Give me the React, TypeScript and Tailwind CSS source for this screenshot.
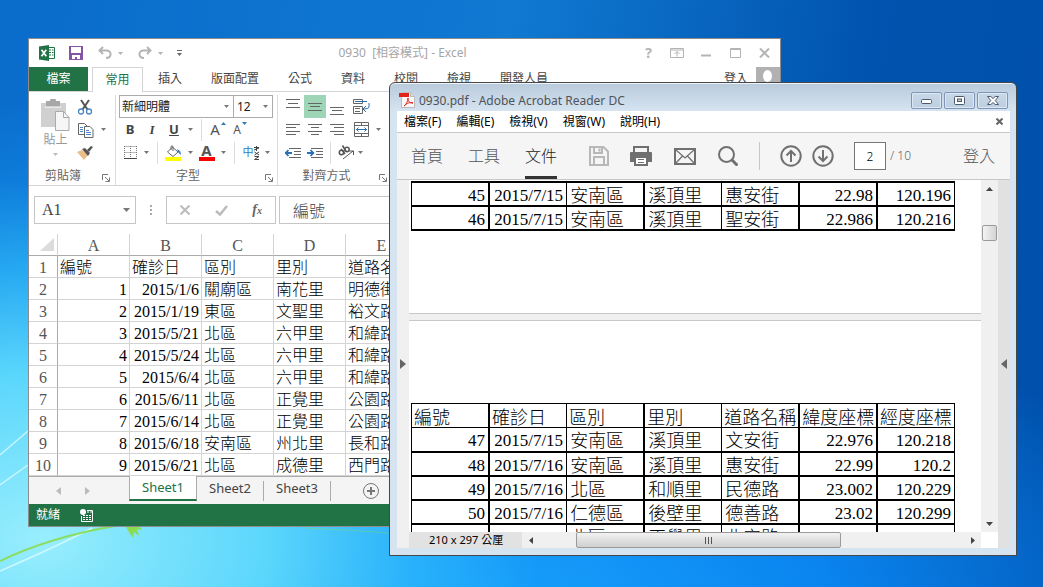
import React from 'react';

const uiFont = "font-['Noto_Sans','Noto_Sans_CJK_TC',sans-serif]";
const cellFont = "font-['Liberation_Serif','Noto_Sans_CJK_TC',serif]";

const ribbonTabs = ['插入', '版面配置', '公式', '資料', '校閱', '檢視', '開發人員'];
const columns = ['A', 'B', 'C', 'D', 'E', 'F', 'G', 'H', 'I', 'J'];

const sheetRows = [
  ['編號', '確診日', '區別', '里別', '道路名稱'],
  ['1', '2015/1/6', '關廟區', '南花里', '明德街'],
  ['2', '2015/1/19', '東區', '文聖里', '裕文路'],
  ['3', '2015/5/21', '北區', '六甲里', '和緯路'],
  ['4', '2015/5/24', '北區', '六甲里', '和緯路'],
  ['5', '2015/6/4', '北區', '六甲里', '和緯路'],
  ['6', '2015/6/11', '北區', '正覺里', '公園路'],
  ['7', '2015/6/14', '北區', '正覺里', '公園路'],
  ['8', '2015/6/18', '安南區', '州北里', '長和路'],
  ['9', '2015/6/21', '北區', '成德里', '西門路'],
];

const pdfHeader = ['編號', '確診日', '區別', '里別', '道路名稱', '緯度座標', '經度座標'];

const pdfPageOne = [
  ['45', '2015/7/15', '安南區', '溪頂里', '惠安街', '22.98', '120.196'],
  ['46', '2015/7/15', '安南區', '溪頂里', '聖安街', '22.986', '120.216'],
];

const pdfPageTwo = [
  ['47', '2015/7/15', '安南區', '溪頂里', '文安街', '22.976', '120.218'],
  ['48', '2015/7/16', '安南區', '溪頂里', '惠安街', '22.99', '120.2'],
  ['49', '2015/7/16', '北區', '和順里', '民德路', '23.002', '120.229'],
  ['50', '2015/7/16', '仁德區', '後壁里', '德善路', '23.02', '120.299'],
  ['51', '2015/7/16', '北區', '正覺里', '北安路', '22.968', '120.191'],
];

const Caret: React.FC<{ className?: string }> = ({ className = 'text-[#777]' }) => (
  <svg width="5" height="3" viewBox="0 0 5 3" className={`shrink-0 ${className}`}>
    <path d="M0 0h5L2.5 3z" fill="currentColor" />
  </svg>
);

const Launcher: React.FC<{ label: string }> = ({ label }) => (
  <button aria-label={label} className="text-[#777]">
    <svg width="8" height="8" viewBox="0 0 8 8" fill="none" stroke="currentColor">
      <path d="M.5 6V.5H6M3 3l4 4M7.5 3.500V7.500H3.500" />
    </svg>
  </button>
);

const IconButton: React.FC<{ label: string; className?: string; children: React.ReactNode }> = ({
  label,
  className = 'w-[22px]',
  children,
}) => (
  <button aria-label={label} className={`flex h-[23px] shrink-0 items-center justify-center ${className}`}>
    {children}
  </button>
);

const Separator = () => <span className="h-[22px] w-px shrink-0 bg-[#dcdcdc]" />;

const Lines: React.FC<{ rows: [number, number, number][]; children?: React.ReactNode }> = ({ rows, children }) => (
  <svg width="16" height="16" viewBox="0 0 16 16" fill="none" stroke="#666">
    {rows.map(([y, from, to]) => (
      <path key={y} d={`M${from} ${y + 0.5}H${to}`} />
    ))}
    {children}
  </svg>
);

const ExcelTitleBar = () => (
  <div className="grid h-7 grid-cols-[1fr_auto_1fr] items-center pl-[10px] pr-[10px]">
    <div className="flex items-center">
      <svg width="16" height="16" viewBox="0 0 16 16">
        <path d="M9 2.500h6.500v11H9" fill="#fff" stroke="#217346" />
        <path d="M10 5h2M10 7.500h2M10 10h2M13 5h1.500M13 7.500h1.500M13 10h1.500" stroke="#217346" />
        <path d="M0 1.500L10 0v16L0 14.500z" fill="#217346" />
        <path d="M2.500 4.800l4.800 6.500M7.300 4.800l-4.800 6.500" stroke="#fff" strokeWidth="1.700" />
      </svg>
      <button aria-label="儲存檔案" className="ml-[14px]">
        <svg width="14" height="14" viewBox="0 0 14 14">
          <path d="M0 0h14v14H0z" fill="#8454a5" />
          <path d="M2 1h10v6H2zM3 9h8v4H8v-2H6v2H3z" fill="#fff" />
        </svg>
      </button>
      <button aria-label="復原" className="ml-[15px] flex items-center gap-[6px]">
        <svg width="14" height="14" viewBox="0 0 14 14" fill="none" stroke="#b4b4b4" strokeWidth="2">
          <path d="M5 1L1.500 4.500 5 8M2 4.500h6.500c5.500 0 5.500 7.500-.5 7.500" />
        </svg>
        <Caret className="text-[#b4b4b4]" />
      </button>
      <button aria-label="取消復原" className="ml-[15px] flex items-center gap-[6px]">
        <svg width="14" height="14" viewBox="0 0 14 14" fill="none" stroke="#b4b4b4" strokeWidth="2">
          <path d="M9 1l3.500 3.500L9 8M12 4.500H5.500C0 4.500 0 12 6 12" />
        </svg>
        <Caret className="text-[#b4b4b4]" />
      </button>
      <button aria-label="自訂快速存取工具列" className="ml-[14px]">
        <svg width="5" height="6" viewBox="0 0 5 6" fill="#666">
          <path d="M0 0h5v1H0zM0 3h5L2.500 6z" />
        </svg>
      </button>
    </div>
    <h1 className="whitespace-pre pr-1 text-xs text-[#a6a6a6]">0930  [相容模式] - Excel</h1>
    <div className="flex items-center justify-end text-[#b4b4b4]">
      <button aria-label="說明" className="text-sm font-bold leading-4">?</button>
      <button aria-label="功能區顯示選項" className="ml-[18px]">
        <svg width="14" height="12" viewBox="0 0 14 12" fill="none" stroke="currentColor">
          <path d="M.5 1.500h13v9H.5zM.5 3h13M7 9.500v-5M4.500 7L7 4.500 9.500 7" />
        </svg>
      </button>
      <button aria-label="最小化" className="ml-[17px]">
        <svg width="10" height="10" viewBox="0 0 10 10"><path d="M0 6.500h10v2H0z" fill="currentColor" /></svg>
      </button>
      <button aria-label="最大化" className="ml-[19px]">
        <svg width="11" height="10" viewBox="0 0 11 10" fill="none" stroke="currentColor">
          <path d="M.5.5h10v9H.5zM0 1.500h11" />
        </svg>
      </button>
      <button aria-label="關閉" className="ml-[18px]">
        <svg width="11" height="10" viewBox="0 0 11 10" fill="none" stroke="currentColor" strokeWidth="2">
          <path d="M1 .5l9 9M10 .5l-9 9" />
        </svg>
      </button>
    </div>
  </div>
);

const ExcelTabs = () => (
  <nav className="flex h-[25px] items-stretch border-b border-[#d4d4d4] text-xs text-[#444]">
    <button className="w-[59px] shrink-0 bg-[#217346] text-white">檔案</button>
    <button className="-mb-px ml-1 w-[51px] shrink-0 border border-b-0 border-[#d4d4d4] bg-white text-[#217346]">常用</button>
    <div className="ml-[15px] flex gap-[29px] whitespace-nowrap">
      {ribbonTabs.map(tab => (
        <button key={tab}>{tab}</button>
      ))}
    </div>
    <button className="ml-auto shrink-0 pr-2">登入</button>
    <svg width="24" height="24" viewBox="0 0 24 24" className="shrink-0 bg-[#b1b1b1]">
      <ellipse cx="11.500" cy="9" rx="4.500" ry="6" fill="#fff" />
      <path d="M4 24c0-7 3-9 5-9h5c2 0 5 2 5 9z" fill="#fff" />
    </svg>
  </nav>
);

const ClipboardGroup = () => (
  <section className="flex w-[86px] shrink-0 flex-col">
    <div className="flex h-[69px] pl-3">
      <button className="flex w-[29px] flex-col items-center pt-1 text-xs leading-[18px] text-[#999]">
        <svg width="29" height="32" viewBox="0 0 29 32" className="shrink-0">
          <path d="M0 4h25v24H0z" fill="#d0d0d0" />
          <path d="M5 2h4a3 3 0 0 1 6 0h4v6H5z" fill="#a8a8a8" />
          <path d="M4 8h16" stroke="#fff" />
          <path d="M14.500 12.500h8l5.500 6v13H14.500z" fill="#f6f6f6" stroke="#aaa" />
          <path d="M22.500 12.500v6H28" fill="none" stroke="#aaa" />
        </svg>
        <span className="whitespace-nowrap">貼上</span>
        <Caret className="mt-1 text-[#bbb]" />
      </button>
      <div className="ml-1 flex flex-col items-start">
        <IconButton label="剪下">
          <svg width="16" height="16" viewBox="0 0 16 16" fill="none">
            <path d="M4 1l6.500 9.500M12 1L5.500 10.500" stroke="#555" strokeWidth="2" />
            <circle cx="4" cy="12.500" r="2.500" stroke="#4a86c5" strokeWidth="1.300" />
            <circle cx="12" cy="12.500" r="2.500" stroke="#4a86c5" strokeWidth="1.300" />
          </svg>
        </IconButton>
        <IconButton label="複製" className="w-8 gap-[7px] pl-1">
          <svg width="16" height="16" viewBox="0 0 16 16" fill="#fff" stroke="#666">
            <path d="M.5 1.500h6l3 3v8h-9z" />
            <path d="M2 5.500h3M2 7.500h3M2 9.500h3" stroke="#4a86c5" />
            <path d="M6.500 4.500h5.500l3 3v8H6.500z" />
            <path d="M8 8.500h3M8 10.500h5M8 12.500h5" stroke="#4a86c5" />
          </svg>
          <Caret />
        </IconButton>
        <IconButton label="複製格式">
          <svg width="16" height="14" viewBox="0 0 16 14">
            <path d="M0 6l5-2 6 5-4 5z" fill="#e8bf87" />
            <path d="M5 3l3-1 5 5-2 3z" fill="#555" />
            <path d="M10 4l4-4 2 1-4 5z" fill="#555" />
          </svg>
        </IconButton>
      </div>
    </div>
    <div className="flex h-[21px] items-center pl-4 pr-[5px] pt-[2px] text-xs text-[#666]">
      <span>剪貼簿</span>
      <span className="ml-auto flex pt-1"><Launcher label="剪貼簿設定" /></span>
    </div>
  </section>
);

const FontGroup = () => (
  <section className="flex w-[162px] shrink-0 flex-col border-l border-[#dcdcdc] pl-[3px]">
    <div className="flex h-[23px] text-xs text-[#222]">
      <label className="flex w-[115px] items-center border border-[#ababab] pl-[2px] pr-1">
        <input aria-label="字型名稱" defaultValue="新細明體" className="w-full min-w-0 outline-none" />
        <Caret />
      </label>
      <label className="-ml-px flex w-[40px] items-center border border-[#ababab] pl-[3px] pr-1">
        <input aria-label="字型大小" defaultValue="12" className="w-full min-w-0 outline-none" />
        <Caret />
      </label>
    </div>
    <div className="flex h-[23px] items-center text-[13px] text-[#444]">
      <IconButton label="粗體"><b>B</b></IconButton>
      <IconButton label="斜體"><b className="font-['Liberation_Serif',serif] italic">I</b></IconButton>
      <IconButton label="底線"><b className="underline">U</b></IconButton>
      <Caret className="ml-[3px] mr-2 text-[#777]" />
      <Separator />
      <IconButton label="放大字型" className="ml-[5px] w-[22px] gap-px text-[15px] text-[#555]">
        A<svg width="5" height="3" viewBox="0 0 5 3" className="-mt-3"><path d="M0 3h5L2.500 0z" fill="#2b7cbf" /></svg>
      </IconButton>
      <IconButton label="縮小字型" className="w-[22px] gap-px text-xs text-[#555]">
        A<Caret className="-mt-3 text-[#2b7cbf]" />
      </IconButton>
    </div>
    <div className="flex h-[23px] items-center">
      <IconButton label="框線">
        <svg width="13" height="13" viewBox="0 0 13 13" fill="none" stroke="#777">
          <path d="M.5.5h12M.5 6.500h12M.5 0v12M6.500 0v12M12.500 0v12" strokeDasharray="1 1" />
          <path d="M0 12.500h13" stroke="#444" />
        </svg>
      </IconButton>
      <Caret className="ml-[3px] mr-2 text-[#777]" />
      <Separator />
      <IconButton label="填滿色彩" className="ml-[6px] w-[19px]">
        <svg width="17" height="16" viewBox="0 0 17 16" fill="none">
          <path d="M2.500 7l5-5 5.500 5-5 4.500z" stroke="#666" />
          <path d="M6 5V1.500Q7 0 8 1.500V6" stroke="#666" />
          <path d="M12 4q5 2 3.500 6-1.500-2-2.500-3z" fill="#3d7fc0" />
          <path d="M0 12h16v4H0z" fill="#ff0" />
        </svg>
      </IconButton>
      <Caret className="mx-[5px] text-[#777]" />
      <IconButton label="字型色彩" className="w-[17px]">
        <span className="block w-4 border-b-4 border-[red] text-center text-[15px] font-bold leading-[13px] text-[#555]">A</span>
      </IconButton>
      <Caret className="ml-[6px] mr-2 text-[#777]" />
      <Separator />
      <IconButton label="注音標示" className="ml-2 w-4">
        <span className="text-[11px] text-[#2b7cbf]">中</span>
        <svg width="6" height="14" viewBox="0 0 6 14" fill="none" stroke="#444" className="shrink-0">
          <path d="M0 1.500h5M0 4l5-2M2.500 0v5M.5 6l4.500 3M5 6L.5 9M.5 10.500H5L.5 13.500H5" />
        </svg>
      </IconButton>
      <Caret className="ml-[6px] text-[#777]" />
    </div>
    <div className="flex h-[21px] items-center pr-1 pt-[2px] text-xs text-[#666]">
      <span className="flex-1 pr-2 text-center">字型</span>
      <span className="flex pt-1"><Launcher label="字型設定" /></span>
    </div>
  </section>
);

const AlignmentGroup = () => (
  <section className="flex w-[112px] shrink-0 flex-col border-l border-[#dcdcdc] pl-1">
    <div className="flex h-[23px]">
      <IconButton label="靠上對齊"><Lines rows={[[0, 1, 15], [4, 3, 13], [8, 1, 15]]} /></IconButton>
      <IconButton label="置中對齊" className="w-[22px] bg-[#9fd5b7]"><Lines rows={[[4, 1, 15], [7, 3, 13], [11, 1, 15]]} /></IconButton>
      <IconButton label="靠下對齊"><Lines rows={[[8, 1, 15], [11, 3, 13], [15, 1, 15]]} /></IconButton>
      <IconButton label="自動換列" className="ml-[2px] w-[22px]">
        <svg width="17" height="16" viewBox="0 0 17 16" fill="none" stroke="#666">
          <path d="M.5.500h9v4h-9zM.5 7.500h9v7h-9zM2 9.500h5M2 12.500h5" />
          <path d="M2 2.500h12M16 4v4q0 2-5 2M13 7l-3 3 3 3" stroke="#2b6fb5" />
        </svg>
      </IconButton>
    </div>
    <div className="flex h-[23px] items-center">
      <IconButton label="靠左對齊"><Lines rows={[[2, 1, 15], [5, 1, 11], [9, 1, 15], [12, 1, 11]]} /></IconButton>
      <IconButton label="水平置中"><Lines rows={[[2, 1, 15], [5, 4, 12], [9, 1, 15], [12, 4, 12]]} /></IconButton>
      <IconButton label="靠右對齊"><Lines rows={[[2, 1, 15], [5, 5, 15], [9, 1, 15], [12, 5, 15]]} /></IconButton>
      <IconButton label="跨欄置中" className="ml-[2px] w-[22px]">
        <svg width="15" height="15" viewBox="0 0 15 15" fill="none" stroke="#666">
          <path d="M.5.500h14v14H.5zM.5 3.500h14M.5 11.500h14M7.500 0v3M7.500 12v3" />
          <path d="M2 7.500h11M4.500 5.500l-2 2 2 2M10.500 5.500l2 2-2 2" stroke="#2b6fb5" />
        </svg>
      </IconButton>
      <Caret className="ml-1 text-[#777]" />
    </div>
    <div className="flex h-[23px] items-center">
      <IconButton label="減少縮排">
        <Lines rows={[[3, 4, 16], [6, 9, 16], [9, 9, 16], [12, 4, 16]]}>
          <path d="M0 8h7M3.500 5L.7 8l2.800 3" stroke="#2b6fb5" strokeWidth="1.800" />
        </Lines>
      </IconButton>
      <IconButton label="增加縮排">
        <Lines rows={[[3, 4, 16], [6, 9, 16], [9, 9, 16], [12, 4, 16]]}>
          <path d="M0 8h7M3.500 5l2.800 3-2.800 3" stroke="#2b6fb5" strokeWidth="1.800" />
        </Lines>
      </IconButton>
      <span className="ml-1 flex"><Separator /></span>
      <IconButton label="方向" className="ml-[6px] w-[18px]">
        <svg width="17" height="15" viewBox="0 0 17 15" fill="none" stroke="#555">
          <circle cx="3.500" cy="7.500" r="2.200" strokeWidth="1.500" />
          <circle cx="9" cy="4.500" r="2.200" strokeWidth="1.500" />
          <path d="M3 4l4 5M4.500 .5l3.500 6" strokeWidth="1.500" />
          <path d="M5 14l10-8M11.500 6h4v4" />
        </svg>
      </IconButton>
      <Caret className="ml-[3px] text-[#777]" />
    </div>
    <div className="flex h-[21px] items-center pr-[2px] pt-[2px] text-xs text-[#666]">
      <span className="flex-1 pr-2 text-center">對齊方式</span>
      <span className="flex pt-1"><Launcher label="對齊方式設定" /></span>
    </div>
  </section>
);

const FormulaBar = () => (
  <div className={`flex h-12 items-center pl-[5px] text-base text-[#444] ${cellFont}`}>
    <label className="flex h-7 w-[102px] shrink-0 items-center border border-[#c6c6c6] pl-[7px] pr-[5px]">
      <input aria-label="名稱方塊" defaultValue="A1" className="w-full min-w-0 outline-none" />
      <svg width="7" height="4" viewBox="0 0 7 4" className="shrink-0"><path d="M0 0h7L3.500 4z" fill="#777" /></svg>
    </label>
    <svg width="2" height="10" viewBox="0 0 2 10" className="ml-[14px] shrink-0">
      <path d="M0 0h2v2H0zM0 4h2v2H0zM0 8h2v2H0z" fill="#aaa" />
    </svg>
    <div className="ml-[14px] flex h-7 w-[110px] shrink-0 items-center justify-between border border-[#c6c6c6] px-[13px]">
      <button aria-label="取消">
        <svg width="10" height="10" viewBox="0 0 10 10" stroke="#bbb" strokeWidth="2"><path d="M.5.500l9 9M9.500.500l-9 9" /></svg>
      </button>
      <button aria-label="輸入">
        <svg width="13" height="11" viewBox="0 0 13 11" fill="none" stroke="#bbb" strokeWidth="2.500"><path d="M1 6l4 3.500L12 1" /></svg>
      </button>
      <button aria-label="插入函數" className="text-sm font-bold italic leading-4 text-[#666]">f<span className="text-[10px]">x</span></button>
    </div>
    <input
      aria-label="資料編輯列"
      defaultValue="編號"
      className="ml-[3px] h-7 min-w-0 flex-1 border border-r-0 border-[#c6c6c6] pl-[13px] font-light outline-none"
    />
  </div>
);

const SheetGrid = () => (
  <div className="overflow-hidden">
    <table className={`w-[749px] table-fixed border-separate border-spacing-0 text-base leading-[21px] ${cellFont}`}>
      <colgroup>
        <col className="w-[29px]" />
        {columns.map(column => (
          <col key={column} className="w-[72px]" />
        ))}
      </colgroup>
      <thead>
        <tr className="h-[22px] text-[#555]">
          <th aria-label="全選" className="border-b border-r border-b-[#ababab] border-r-[#d4d4d4] p-0">
            <svg width="14" height="13" viewBox="0 0 14 13" className="ml-auto mr-[3px]"><path d="M14 0v13H0z" fill="#dcdcdc" /></svg>
          </th>
          {columns.map(column => (
            <th key={column} className="border-b border-r border-b-[#ababab] border-r-[#d4d4d4] p-0 pt-[2px] font-normal leading-[19px]">{column}</th>
          ))}
        </tr>
      </thead>
      <tbody>
        {sheetRows.map((row, index) => (
          <tr key={index} className="h-[22px]">
            <th scope="row" className="border-b border-r border-b-[#d4d4d4] border-r-[#ababab] p-0 pt-[2px] font-normal leading-[19px] text-[#555]">{index + 1}</th>
            {columns.map((column, i) => (
              <td
                key={column}
                className={`overflow-hidden whitespace-nowrap border-b border-r border-[#d4d4d4] p-0 pt-[2px] font-light leading-[19px] text-black ${
                  index > 0 && i < 2 ? 'pr-[2px] text-right' : 'pl-[2px]'
                }`}
              >
                {row[i]}
              </td>
            ))}
          </tr>
        ))}
      </tbody>
    </table>
  </div>
);

const SheetTabs = () => (
  <div className="flex h-7 border-t border-[#ababab] bg-[#f4f4f4] text-[13px] text-[#444]">
    <div className="flex w-[100px] shrink-0 items-center gap-6 pl-[27px] text-[#bbb]">
      <button aria-label="上一張工作表"><svg width="5" height="8" viewBox="0 0 5 8"><path d="M5 0v8L0 4z" fill="currentColor" /></svg></button>
      <button aria-label="下一張工作表"><svg width="5" height="8" viewBox="0 0 5 8"><path d="M0 0v8l5-4z" fill="currentColor" /></svg></button>
    </div>
    <button className="-mt-px h-[25px] w-[68px] border-x border-b-2 border-x-[#ababab] border-b-[#217346] bg-white text-[#217346]">Sheet1</button>
    <button className="h-6 w-[66px]">Sheet2</button>
    <span className="mt-1 h-5 w-px bg-[#ababab]" />
    <button className="h-6 w-[66px]">Sheet3</button>
    <span className="mt-1 h-5 w-px bg-[#ababab]" />
    <button aria-label="新增工作表" className="ml-8">
      <svg width="16" height="16" viewBox="0 0 16 16" fill="none" stroke="#777">
        <circle cx="8" cy="8" r="7.500" />
        <path d="M8 4v8M4 8h8" strokeWidth="2" />
      </svg>
    </button>
  </div>
);

const ExcelWindow = () => (
  <main className="absolute left-7 right-[262px] top-[38px] overflow-hidden border border-[#8c8c8c] bg-white">
    <ExcelTitleBar />
    <ExcelTabs />
    <div className="flex border-b border-[#d4d4d4] pt-[3px]">
      <ClipboardGroup />
      <FontGroup />
      <AlignmentGroup />
    </div>
    <FormulaBar />
    <SheetGrid />
    <SheetTabs />
    <footer className="flex h-[22px] items-center gap-5 bg-[#217346] pl-[7px] text-xs text-white">
      <span>就緒</span>
      <svg width="13" height="13" viewBox="0 0 13 13">
        <circle cx="3" cy="3" r="3" fill="#fff" />
        <path d="M7 1.500h5.500v11h-11V7" fill="none" stroke="#fff" />
        <path d="M7 3h5M3 6.500h9M3 8.500h9M3 10.500h9" stroke="#fff" strokeDasharray="2 1" />
      </svg>
    </footer>
  </main>
);

const PdfTable: React.FC<{ header?: string[]; rows: string[][] }> = ({ header, rows }) => (
  <table className={`w-[544px] table-fixed border-collapse font-light leading-[18px] text-black ${cellFont}`}>
    {header && (
      <thead>
        <tr className="h-6">
          {header.map(title => (
            <th
              key={title}
              className="whitespace-nowrap border border-black p-0 pl-[2px] pt-1 text-left text-lg font-light leading-[18px] even:border-l-2 last:border-l-2"
            >
              {title}
            </th>
          ))}
        </tr>
      </thead>
    )}
    <tbody>
      {rows.map(row => (
        <tr key={row[0]} className="h-6">
          {row.map((value, i) => (
            <td
              key={i}
              className={`whitespace-nowrap border border-b-2 border-black p-0 pt-1 leading-[18px] even:border-l-2 last:border-l-2 ${
                i < 2 || i > 4 ? 'pr-[3px] text-right text-[17px]' : 'pl-[3px] text-lg'
              } ${header ? '' : 'border-t-2'}`}
            >
              {value}
            </td>
          ))}
        </tr>
      ))}
    </tbody>
  </table>
);

const windowButton =
  'flex h-[17px] w-[31px] items-center justify-center rounded-[2px] border border-[#8095b5] bg-linear-to-b from-[#c9d8e8] to-[#bccee1] shadow-[inset_0_0_0_1px_#dce8f4]';

const AcrobatTitleBar = () => (
  <div className="flex h-7 items-center pl-[2px] pr-[2px] pt-[6px]">
    <svg width="16" height="16" viewBox="0 0 16 16">
      <path d="M2.500.5h9l4 4v11h-13z" fill="#f8f8f8" stroke="#bbb" />
      <path d="M11.500.5v4h4" fill="#ddd" stroke="#bbb" />
      <path d="M0 1h10v4H0z" fill="#e2231a" />
      <path d="M5 14c2-1 4-5 4-8 0 4 2 5 5 5-3-1-6 0-9 3z" fill="none" stroke="#e2231a" />
    </svg>
    <h2 className="ml-1 pt-px text-xs text-[#4f5358]">0930.pdf - Adobe Acrobat Reader DC</h2>
    <div className="ml-auto flex gap-[2px]">
      <button aria-label="最小化視窗" className={windowButton}>
        <svg width="12" height="5" viewBox="0 0 12 5" className="mt-[2px]"><rect x=".5" y=".5" width="10" height="4" rx="1" fill="#fff" stroke="#4c586e" /></svg>
      </button>
      <button aria-label="最大化視窗" className={windowButton}>
        <svg width="11" height="9" viewBox="0 0 11 9" fill="#fff" stroke="#4c586e">
          <rect x=".5" y=".5" width="10" height="8" rx="1" />
          <rect x="3.500" y="3" width="4" height="2.500" fill="#bccee1" />
        </svg>
      </button>
      <button aria-label="關閉視窗" className={windowButton}>
        <svg width="12" height="9" viewBox="0 0 12 9" fill="#fff" stroke="#4c586e">
          <path d="M.5.500h3.300L6 2.500 8.200.500h3.300L8.200 4.500l3.300 4H8.200L6 6.500l-2.200 2H.500l3.300-4z" />
        </svg>
      </button>
    </div>
  </div>
);

const AcrobatToolbar = () => (
  <div className="flex h-12 items-center border-y border-[#c8c8c8] bg-[#f5f5f5] text-base font-light text-[#555]">
    <nav className="flex h-full gap-[25px] pl-[14px]">
      <button>首頁</button>
      <button>工具</button>
      <button className="border-b-[3px] border-t-[3px] border-t-transparent border-b-[#333] text-[#222]">文件</button>
    </nav>
    <div className="ml-8 flex items-center gap-[22px] text-[#707070]">
      <button aria-label="儲存" className="text-[#b8b8b8]">
        <svg width="20" height="20" viewBox="0 0 20 20" fill="none" stroke="currentColor" strokeWidth="2">
          <path d="M1 1h13.500L19 5.500V19H1zM5 1v6h8V1M10.500 2.500v3M5 19v-8h10v8" />
        </svg>
      </button>
      <button aria-label="列印" className="-ml-px">
        <svg width="22" height="20" viewBox="0 0 22 20">
          <path d="M4 7V1h14v6" fill="none" stroke="currentColor" strokeWidth="2" />
          <path d="M1 6h20a1 1 0 0 1 1 1v9h-4v-4H4v4H0V7a1 1 0 0 1 1-1z" fill="currentColor" />
          <path d="M5 11h12v8H5z" fill="#fff" stroke="currentColor" strokeWidth="2" />
          <path d="M8 13.500h6M8 16.500h6" stroke="currentColor" />
        </svg>
      </button>
      <button aria-label="電子郵件">
        <svg width="22" height="17" viewBox="0 0 22 17" fill="none" stroke="currentColor">
          <path d="M1 1h20v15H1z" strokeWidth="2" />
          <path d="M2 2l9 8 9-8M2 15l6.500-7M20 15l-6.500-7" strokeWidth="1.300" />
        </svg>
      </button>
      <button aria-label="搜尋">
        <svg width="20" height="20" viewBox="0 0 20 20" fill="none" stroke="currentColor">
          <circle cx="8.500" cy="8.500" r="7.500" strokeWidth="2" />
          <path d="M14 14l5.500 5.500" strokeWidth="3" />
        </svg>
      </button>
    </div>
    <span className="ml-[21px] h-7 w-px bg-[#c8c8c8]" />
    <div className="ml-5 flex gap-[10px] text-[#707070]">
      <button aria-label="上一頁">
        <svg width="22" height="22" viewBox="0 0 22 22" fill="none" stroke="currentColor" strokeWidth="2">
          <circle cx="11" cy="11" r="9.700" />
          <path d="M11 17V6M6.500 10.500L11 6l4.500 4.500" />
        </svg>
      </button>
      <button aria-label="下一頁">
        <svg width="22" height="22" viewBox="0 0 22 22" fill="none" stroke="currentColor" strokeWidth="2">
          <circle cx="11" cy="11" r="9.700" />
          <path d="M11 5v11M6.500 11.500L11 16l4.500-4.500" />
        </svg>
      </button>
    </div>
    <input aria-label="頁碼" defaultValue="2" className="ml-5 h-7 w-8 border border-[#777] bg-white text-center text-xs text-black" />
    <span className="ml-1 text-xs text-[#666]">/ 10</span>
    <button className="ml-auto pr-[15px]">登入</button>
  </div>
);

const VerticalScrollbar = () => (
  <div className="flex w-[17px] shrink-0 flex-col items-center bg-[#f0f0f0]">
    <button aria-label="向上捲動" className="flex h-[17px] items-center">
      <svg width="7" height="4" viewBox="0 0 7 4"><path d="M0 4h7L3.500 0z" fill="#444" /></svg>
    </button>
    <span className="mt-7 h-4 w-[15px] rounded-[2px] border border-[#9a9a9a] bg-linear-to-r from-[#f4f4f4] to-[#d4d4d4]" />
    <button aria-label="向下捲動" className="mt-auto flex h-[17px] items-center">
      <svg width="7" height="4" viewBox="0 0 7 4"><path d="M0 0h7L3.500 4z" fill="#444" /></svg>
    </button>
  </div>
);

const HorizontalScrollbar = () => (
  <div className="flex h-4 bg-[#f0f0f0]">
    <span className="w-[113px] shrink-0 bg-[#e2e2e2] pl-5 text-[11px] leading-4 text-black">210 x 297 公厘</span>
    <button aria-label="向左捲動" className="flex w-[17px] shrink-0 items-center justify-center">
      <svg width="4" height="7" viewBox="0 0 4 7"><path d="M4 0v7L0 3.500z" fill="#444" /></svg>
    </button>
    <div className="flex min-w-0 flex-1 pl-[37px]">
      <span className="flex w-[265px] items-center justify-center gap-[2px] rounded-[2px] border border-[#9a9a9a] bg-linear-to-b from-[#f2f2f2] to-[#cfcfcf]">
        <i className="h-[7px] w-px bg-[#555]" />
        <i className="h-[7px] w-px bg-[#555]" />
        <i className="h-[7px] w-px bg-[#555]" />
      </span>
    </div>
    <button aria-label="向右捲動" className="flex w-[17px] shrink-0 items-center justify-center">
      <svg width="4" height="7" viewBox="0 0 4 7"><path d="M0 0v7l4-3.500z" fill="#444" /></svg>
    </button>
    <span className="w-[17px] shrink-0 bg-white" />
  </div>
);

const AcrobatWindow = () => (
  <section className="absolute bottom-[31px] left-[389px] right-[26px] top-[82px] flex flex-col rounded-t-[6px] border border-[#474747] bg-linear-to-b from-[#b9cadb] via-[#d6e4f1] via-[28px] to-[#d6e4f1] px-[6px] pb-[7px] pl-[7px] shadow-[inset_0_1px_0_#eef4fa]">
    <AcrobatTitleBar />
    <div className="flex min-h-0 flex-1 flex-col bg-white">
      <nav className="flex h-[21px] shrink-0 items-center gap-[15px] px-[7px] text-xs text-black">
        <button>檔案(F)</button>
        <button>編輯(E)</button>
        <button>檢視(V)</button>
        <button>視窗(W)</button>
        <button>說明(H)</button>
        <button aria-label="關閉文件" className="ml-auto">
          <svg width="7" height="7" viewBox="0 0 7 7" stroke="#666" strokeWidth="2"><path d="M.5.500l6 6M6.500.500l-6 6" /></svg>
        </button>
      </nav>
      <AcrobatToolbar />
      <div className="flex min-h-0 flex-1">
        <button aria-label="展開導覽窗格" className="flex w-3 shrink-0 items-center justify-center bg-[#f0f0f0]">
          <svg width="6" height="10" viewBox="0 0 6 10"><path d="M0 0v10l6-5z" fill="#666" /></svg>
        </button>
        <div className="flex min-w-0 flex-1 flex-col">
          <div className="flex min-h-0 flex-1">
            <div className="min-w-0 flex-1 overflow-hidden bg-white pl-[2px] pt-px">
              <PdfTable rows={pdfPageOne} />
              <div className="-ml-[2px] mb-[82px] mt-[82px] h-2 border-y border-[#c8c8c8] bg-[#efefef]" />
              <PdfTable header={pdfHeader} rows={pdfPageTwo} />
            </div>
            <VerticalScrollbar />
          </div>
          <HorizontalScrollbar />
        </div>
        <button aria-label="展開工具窗格" className="flex w-3 shrink-0 items-center justify-center bg-[#e1e1e1]">
          <svg width="6" height="10" viewBox="0 0 6 10"><path d="M6 0v10L0 5z" fill="#666" /></svg>
        </button>
      </div>
    </div>
  </section>
);

const App: React.FC = () => (
  <div
    className={`relative min-h-screen overflow-hidden bg-[radial-gradient(ellipse_58%_75%_at_4%_92%,#98eefd_0%,#5ad6fc_38%,#2cb6fbcc_62%,#149af655_82%,transparent_100%),radial-gradient(ellipse_70%_60%_at_45%_105%,#1aa4ff_0%,#0a84ef_50%,transparent_100%),linear-gradient(100deg,#0a6ccb_0%,#1079d2_45%,#0052ad_78%,#0050ab_100%)] ${uiFont}`}
  >
    {/* grass blade and light streaks on the wallpaper */}
    <svg width="420" height="160" viewBox="0 0 420 160" fill="none" className="absolute bottom-0 left-0">
      <path d="M0 58L28 38M0 28L28 4M0 144Q60 118 92 101" stroke="#e8fdff" strokeWidth="1.500" opacity=".7" />
      <path d="M0 134Q50 110 115 99" stroke="#8bdc4f" strokeWidth="2" opacity=".9" />
      <path d="M305 101Q350 103 390 106" stroke="#8bdc4f" opacity=".4" />
      <path d="M125 98q4 8 8 13l1-6 5 4-2-7 5 1-4-6z" fill="#8bdc4f" />
    </svg>
    <ExcelWindow />
    <AcrobatWindow />
  </div>
);

export default App;
